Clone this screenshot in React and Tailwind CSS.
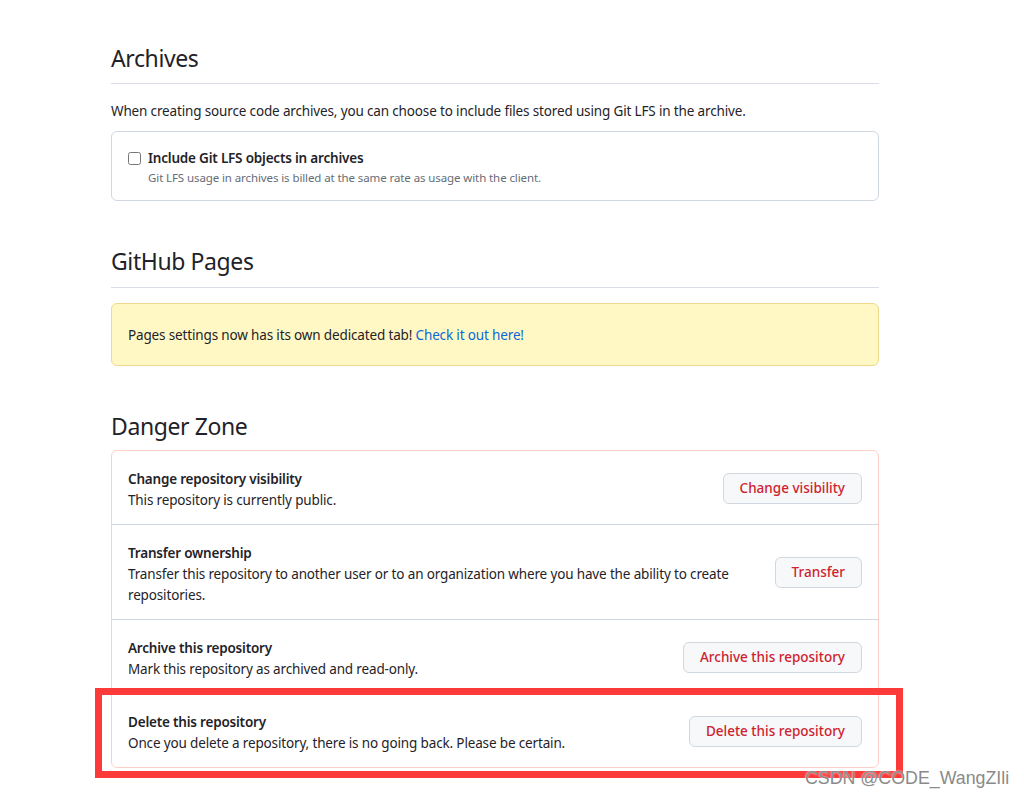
import React from "react";

const dangerRows = [
  {
    title: "Change repository visibility",
    desc: "This repository is currently public.",
    action: "Change visibility",
  },
  {
    title: "Transfer ownership",
    desc: "Transfer this repository to another user or to an organization where you have the ability to create repositories.",
    action: "Transfer",
  },
  {
    title: "Archive this repository",
    desc: "Mark this repository as archived and read-only.",
    action: "Archive this repository",
  },
  {
    title: "Delete this repository",
    desc: "Once you delete a repository, there is no going back. Please be certain.",
    action: "Delete this repository",
  },
];

export default function App() {
  return (
    <div className="relative h-[798px] w-[1024px] overflow-hidden bg-white font-['Noto_Sans',sans-serif] text-[13.5px] leading-[21px] tracking-[-0.15px] text-[#1f2328]">
      <div className="ml-[111px] w-[768px] pt-[40px]">
        {/* Archives */}
        <h2 className="border-b border-[#d8dee4] pb-[7px] text-[23px] font-normal leading-[36px] tracking-[-0.4px]">Archives</h2>
        <p className="mt-4 translate-y-px">
          When creating source code archives, you can choose to include files stored using Git LFS in the archive.
        </p>
        <div className="mt-[10px] rounded-md border border-[#d0d7de] px-4 pt-[15px] pb-[14px]">
          <label className="flex translate-y-px items-start">
            <input type="checkbox" className="mt-[4px] mr-[7px] h-[13px] w-[13px] shrink-0" />
            <div>
              <div className="font-semibold tracking-[-0.2px]">Include Git LFS objects in archives</div>
              <div className="text-[11.5px] leading-[18px] tracking-[-0.1px] text-[#656d76]">
                Git LFS usage in archives is billed at the same rate as usage with the client.
              </div>
            </div>
          </label>
        </div>

        {/* GitHub Pages */}
        <h2 className="mt-[42px] border-b border-[#d8dee4] pb-2 text-[23px] font-normal leading-[36px] tracking-[-0.4px]">GitHub Pages</h2>
        <div className="mt-[15px] rounded-md border border-[#ecd98c] bg-[#fff8c5] px-4 pt-5 pb-[20px]">
          <div className="translate-y-px">
            Pages settings now has its own dedicated tab!{" "}
            <a href="#" className="text-[#0969da]">Check it out here!</a>
          </div>
        </div>

        {/* Danger Zone */}
        <h2 className="mt-[42px] text-[23px] font-normal leading-[36px] tracking-[-0.4px]">Danger Zone</h2>
        <div className="mt-[6px] rounded-md border border-[#ffcecb]">
          {dangerRows.map((r, i) => (
            <div
              key={r.title}
              className={`flex items-center px-4 pt-4 pb-[15px] ${i > 0 ? "border-t border-[#d0d7de]" : ""}`}
            >
              <div className="mr-4 flex-1 translate-y-[2px]">
                <div className="font-semibold tracking-[-0.2px]">{r.title}</div>
                <div>{r.desc}</div>
              </div>
              <button className="h-[31px] shrink-0 rounded-md border border-[#d0d7de] bg-[#f6f8fa] px-4 text-[13.5px] font-medium tracking-normal text-[#cf222e]">
                {r.action}
              </button>
            </div>
          ))}
        </div>
      </div>

      {/* annotation box */}
      <div className="absolute left-[95px] top-[688px] h-[90px] w-[808px] border-[7px] border-[#fd3a3a]" />

      {/* watermark */}
      <div className="absolute left-[805px] top-[766px] font-['Liberation_Sans',sans-serif] text-[17.8px] leading-[24px] tracking-normal text-[#8a8a8a] [text-shadow:0_0_2px_#fff]">
        CSDN @CODE_WangZIli
      </div>
    </div>
  );
}
